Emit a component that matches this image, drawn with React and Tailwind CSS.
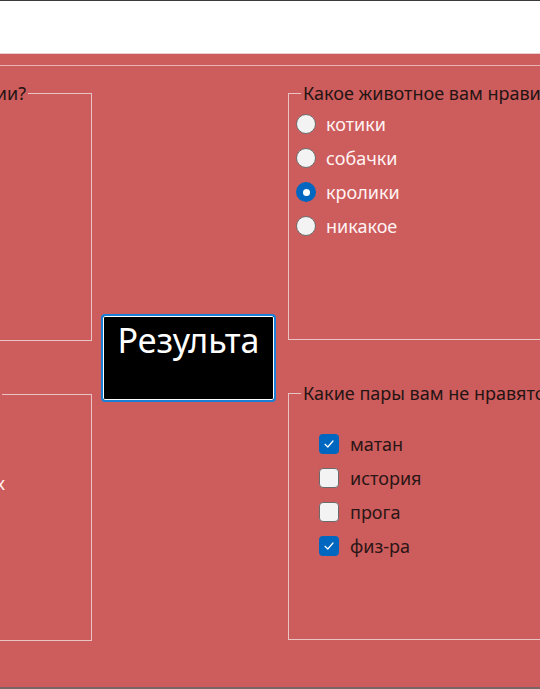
import React from 'react';

const font = { fontFamily: '"Noto Sans", "Open Sans", sans-serif' };

const Radio = ({ label, checked }) => (
    <div className="flex items-center h-[34px]">
        {checked ? (
            <span className="w-[20px] h-[20px] rounded-full bg-[#0067c0] flex items-center justify-center">
                <span className="w-[7px] h-[7px] rounded-full bg-white" />
            </span>
        ) : (
            <span className="w-[20px] h-[20px] rounded-full bg-[#f3f3f3] border border-[#6b6b6b]" />
        )}
        <span className="ml-[10px] text-[18px] text-[#fff3f3] leading-none">{label}</span>
    </div>
);

const Check = ({ label, checked }) => (
    <div className="flex items-center h-[34px]">
        {checked ? (
            <span className="w-[20px] h-[20px] rounded-[4px] bg-[#0067c0] flex items-center justify-center">
                <svg width="12" height="12" viewBox="0 0 12 12" fill="none">
                    <path d="M2 6.3 L4.8 9 L10 3" stroke="#ffffff" strokeWidth="1.2" strokeLinecap="round" strokeLinejoin="round" />
                </svg>
            </span>
        ) : (
            <span className="w-[20px] h-[20px] rounded-[4px] bg-[#f3f3f3] border border-[#6b6b6b]" />
        )}
        <span className="ml-[11px] text-[18px] text-[#2a1616] leading-none">{label}</span>
    </div>
);

const App = () => {
    return (
        <div className="w-[540px] h-[689px] overflow-hidden flex flex-col bg-[#cd5c5c]" style={font}>
            <div className="h-px bg-[#3a3a3a]" />
            <div className="h-[52px] bg-white" />
            <div className="h-px bg-[#ead0d0]" />

            <div className="flex-1 flex flex-col pt-[11px]">
                <div className="h-px bg-[#e6b4b4]" />

                <div className="flex mt-[17px]">
                    {/* left column, cut off by the window edge */}
                    <div className="w-[500px] -ml-[408px] flex-none flex flex-col gap-[43px]">
                        <fieldset className="h-[258px] border border-[#e8c4c4]">
                            <legend className="ml-auto mr-[63px] px-[2px] text-[18px] leading-[20px] text-[#241414] whitespace-nowrap">Какие у вас эмоции?</legend>
                        </fieldset>
                        <fieldset className="h-[257px] border border-[#e8c4c4]">
                            <legend className="ml-auto mr-[89px] px-[2px] text-[18px] leading-[20px] text-[#241414] whitespace-nowrap">Где вы слушаете музыку?</legend>
                            <div className="flex flex-col items-end pr-[86px] pt-[70px]">
                                <span className="text-[18px] leading-none text-[#fff3f3] whitespace-nowrap">в наушниках</span>
                            </div>
                        </fieldset>
                    </div>

                    {/* result button */}
                    <div className="w-[175px] flex-none ml-[9px] mr-[12px] pt-[231px]">
                        <button className="w-[175px] h-[88px] rounded-[4px] border-2 border-[#1a7fd6] bg-black ring-1 ring-inset ring-white flex justify-center pt-[2px]">
                            <span className="text-[34px] leading-[44px] text-white">Результа</span>
                        </button>
                    </div>

                    {/* right column */}
                    <div className="w-[400px] flex-none flex flex-col gap-[43px]">
                        <fieldset className="h-[257px] border border-[#e8c4c4]">
                            <legend className="ml-[12px] px-[2px] text-[18px] leading-[20px] text-[#241414] whitespace-nowrap">Какое животное вам нравится?</legend>
                            <div className="pl-[7px] pt-[4px]">
                                <Radio label="котики" />
                                <Radio label="собачки" />
                                <Radio label="кролики" checked />
                                <Radio label="никакое" />
                            </div>
                        </fieldset>
                        <fieldset className="h-[257px] border border-[#e8c4c4]">
                            <legend className="ml-[12px] px-[2px] text-[18px] leading-[20px] text-[#241414] whitespace-nowrap">Какие пары вам не нравятся?</legend>
                            <div className="pl-[30px] pt-[24px]">
                                <Check label="матан" checked />
                                <Check label="история" />
                                <Check label="прога" />
                                <Check label="физ-ра" checked />
                            </div>
                        </fieldset>
                    </div>
                </div>

                <div className="flex-1" />
            </div>

            <div className="h-[2px] bg-[#7a6464]" />
        </div>
    );
};

export default App;
